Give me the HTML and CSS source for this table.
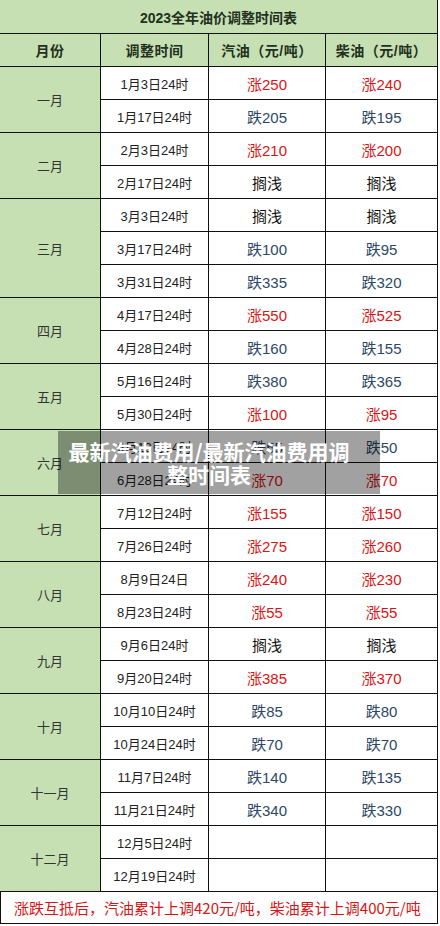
FILE: index.html
```html
<!DOCTYPE html>
<html lang="zh">
<head>
<meta charset="utf-8">
<link rel="stylesheet" href="styles.css">
</head>
<body>
<div class="page">
  <div class="sheet">
    <div class="title">2023全年油价调整时间表</div>
    <div class="head">月份</div>
    <div class="head">调整时间</div>
    <div class="head">汽油（元/吨）</div>
    <div class="head">柴油（元/吨）</div>

    <div class="month span2">一月</div>
    <div class="date">1月3日24时</div><div class="up">涨250</div><div class="up">涨240</div>
    <div class="date">1月17日24时</div><div class="down">跌205</div><div class="down">跌195</div>

    <div class="month span2">二月</div>
    <div class="date">2月3日24时</div><div class="up">涨210</div><div class="up">涨200</div>
    <div class="date">2月17日24时</div><div class="hold">搁浅</div><div class="hold">搁浅</div>

    <div class="month span3">三月</div>
    <div class="date">3月3日24时</div><div class="hold">搁浅</div><div class="hold">搁浅</div>
    <div class="date">3月17日24时</div><div class="down">跌100</div><div class="down">跌95</div>
    <div class="date">3月31日24时</div><div class="down">跌335</div><div class="down">跌320</div>

    <div class="month span2">四月</div>
    <div class="date">4月17日24时</div><div class="up">涨550</div><div class="up">涨525</div>
    <div class="date">4月28日24时</div><div class="down">跌160</div><div class="down">跌155</div>

    <div class="month span2">五月</div>
    <div class="date">5月16日24时</div><div class="down">跌380</div><div class="down">跌365</div>
    <div class="date">5月30日24时</div><div class="up">涨100</div><div class="up">涨95</div>

    <div class="month span2">六月</div>
    <div class="date">6月13日24时</div><div class="down">跌55</div><div class="down">跌50</div>
    <div class="date">6月28日24时</div><div class="up">涨70</div><div class="up">涨70</div>

    <div class="month span2">七月</div>
    <div class="date">7月12日24时</div><div class="up">涨155</div><div class="up">涨150</div>
    <div class="date">7月26日24时</div><div class="up">涨275</div><div class="up">涨260</div>

    <div class="month span2">八月</div>
    <div class="date">8月9日24日</div><div class="up">涨240</div><div class="up">涨230</div>
    <div class="date">8月23日24时</div><div class="up">涨55</div><div class="up">涨55</div>

    <div class="month span2">九月</div>
    <div class="date">9月6日24时</div><div class="hold">搁浅</div><div class="hold">搁浅</div>
    <div class="date">9月20日24时</div><div class="up">涨385</div><div class="up">涨370</div>

    <div class="month span2">十月</div>
    <div class="date">10月10日24时</div><div class="down">跌85</div><div class="down">跌80</div>
    <div class="date">10月24日24时</div><div class="down">跌70</div><div class="down">跌70</div>

    <div class="month span2">十一月</div>
    <div class="date">11月7日24时</div><div class="down">跌140</div><div class="down">跌135</div>
    <div class="date">11月21日24时</div><div class="down">跌340</div><div class="down">跌330</div>

    <div class="month span2">十二月</div>
    <div class="date">12月5日24时</div><div class="hold"></div><div class="hold"></div>
    <div class="date">12月19日24时</div><div class="hold"></div><div class="hold"></div>

    <div class="foot">涨跌互抵后，汽油累计上调420元/吨，柴油累计上调400元/吨</div>
  </div>
  <div class="overlay"><span class="overlay-text">最新汽油费用/最新汽油费用调整时间表</span></div>
</div>
</body>
</html>
```

FILE: styles.css
```css
html, body {
  margin: 0;
  padding: 0;
  background: #fff;
}
body {
  font-family: "Liberation Sans", "Noto Sans CJK SC", sans-serif;
}
.page {
  position: relative;
  width: 440px;
  height: 926px;
}
.sheet {
  display: grid;
  width: 437px;
  grid-template-columns: 100px 107px 116px 111px;
  grid-template-rows: 33px repeat(26, 32px) 31px;
  column-gap: 1px;
  row-gap: 1px;
  padding: 0 1px 1px 0;
  background: #111;
}
.sheet > div {
  display: flex;
  align-items: center;
  justify-content: center;
  background: #fff;
}
.title {
  grid-column: 1 / 5;
  background: #c6e0b4 !important;
  font-family: "Liberation Sans", "Noto Sans CJK SC", sans-serif;
  font-weight: 700;
  font-size: 14px;
  color: #23301c;
}
.head {
  background: #c6e0b4 !important;
  font-weight: 700;
  font-size: 14px;
  color: #23301c;
  letter-spacing: 0.5px;
}
.month {
  grid-column: 1;
  background: #c6e0b4 !important;
  font-size: 13px;
  color: #333;
}
.span2 { grid-row: span 2; }
.span3 { grid-row: span 3; }
.date {
  font-size: 13px;
  color: #222;
}
.up, .down, .hold {
  font-size: 15px;
}
.up { color: #d81414; }
.down { color: #2d4866; }
.hold { color: #111; }
.foot {
  grid-column: 1 / 5;
  justify-content: flex-start !important;
  padding-left: 14px;
  font-family: "Noto Sans CJK SC", sans-serif;
  font-size: 15px;
  color: #d81414;
  box-shadow: inset 1px 0 0 #111;
  letter-spacing: 0;
}
.overlay {
  position: absolute;
  left: 58px;
  top: 431px;
  width: 322px;
  height: 63px;
  box-sizing: border-box;
  padding: 0 30px 0 10px;
  background: rgba(0, 0, 0, 0.37);
  display: flex;
  align-items: center;
  justify-content: center;
  text-align: center;
}
.overlay-text {
  font-family: "Noto Sans CJK SC", sans-serif;
  font-weight: 700;
  font-size: 21px;
  line-height: 23px;
  color: #fff;
}
```
